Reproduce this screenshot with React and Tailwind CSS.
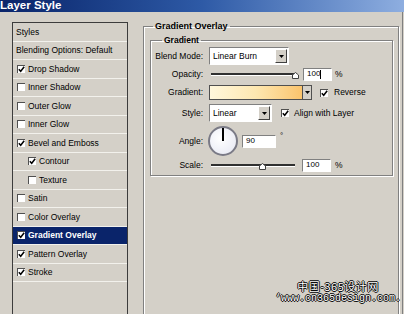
import React from "react";

function Check({ checked }) {
  return (
    <span className="w-[8px] h-[8px] shrink-0 bg-white border-t border-l border-t-[#505050] border-l-[#505050] flex items-center justify-center">
      {checked && (
        <svg width="7" height="7" viewBox="0 0 7 7">
          <path d="M0.8 3.2 L2.7 5.3 L6.2 0.8" stroke="#000" strokeWidth="1.5" fill="none" />
        </svg>
      )}
    </span>
  );
}

function Arrow() {
  return (
    <svg width="5" height="3" viewBox="0 0 5 3">
      <path d="M0 0 H5 L2.5 3 Z" fill="#000" />
    </svg>
  );
}

function Dropdown({ text, w }) {
  return (
    <div className={`flex h-[18px] ${w} bg-white border border-t-[#808080] border-l-[#808080] border-r-[#ffffff] border-b-[#ffffff] items-center`}>
      <span className="flex-1 pl-[3px] text-[8.5px] leading-none">{text}</span>
      <span className="w-[12px] h-[14px] mr-[1px] bg-[#d4d0c8] border border-t-white border-l-white border-r-[#404040] border-b-[#404040] flex items-center justify-center">
        <Arrow />
      </span>
    </div>
  );
}

function Slider({ thumb }) {
  return (
    <div className="relative w-[88px] h-[14px] flex items-center ml-[2px]">
      <div className="w-[84px] h-[3px] bg-[#303030] border-b border-b-white" />
      <svg className="absolute top-[5px]" style={{ left: thumb }} width="7" height="7" viewBox="0 0 7 7">
        <path d="M0.5 6.5 V3 L3.5 0.5 L6.5 3 V6.5 Z" fill="#fff" stroke="#404040" strokeWidth="1" />
      </svg>
    </div>
  );
}

function Input({ text, w, cursor }) {
  return (
    <div className={`${w} h-[13px] bg-white border border-t-[#808080] border-l-[#808080] border-r-[#ffffff] border-b-[#ffffff] flex items-center pl-[3px] text-[8px] leading-none`}>
      {text}
      {cursor && <span className="inline-block w-[1px] h-[9px] bg-black" />}
    </div>
  );
}

function Label({ children }) {
  return <span className="w-[52px] shrink-0 text-right text-[8.5px] leading-none">{children}</span>;
}

const rows = [
  { label: "Styles", header: true },
  { label: "Blending Options: Default", header: true },
  { label: "Drop Shadow", checked: true },
  { label: "Inner Shadow" },
  { label: "Outer Glow" },
  { label: "Inner Glow" },
  { label: "Bevel and Emboss", checked: true },
  { label: "Contour", checked: true, indent: true },
  { label: "Texture", indent: true },
  { label: "Satin" },
  { label: "Color Overlay" },
  { label: "Gradient Overlay", checked: true, selected: true },
  { label: "Pattern Overlay", checked: true },
  { label: "Stroke", checked: true },
];

export default function App() {
  return (
    <div className="relative w-[404px] h-[314px] overflow-hidden bg-[#d4d0c8] font-['Liberation_Sans',Arial,sans-serif] text-black">
      <div className="h-[12px] bg-gradient-to-r from-[#0a246a] via-[#2e5aa6] to-[#8eaee0] flex items-center">
        <span className="text-white font-bold text-[11.5px] leading-none">Layer Style</span>
      </div>
      <div className="flex h-[302px] border-r border-r-[#808080] mr-[1px]">
        {/* Left panel */}
        <div className="ml-[12px] mt-[10px] w-[116px] h-[300px] border border-[#3c3c3c] shrink-0">
          {rows.map((r) => (
            <div
              key={r.label}
              className={`h-[18.5px] border-b border-b-[#f2f1ec] flex items-center ${r.selected ? "bg-[#0a246a] text-white font-bold" : ""} ${r.header ? "pl-[3px]" : r.indent ? "pl-[15px]" : "pl-[4px]"}`}
            >
              {!r.header && <Check checked={r.checked} />}
              <span className={`text-[8.5px] leading-none ${r.header ? "" : "ml-[3px]"}`}>{r.label}</span>
            </div>
          ))}
        </div>

        {/* Right panel */}
        <fieldset className="ml-[15px] mt-[9px] w-[256px] h-[300px] border border-[#808080] shadow-[inset_1px_1px_0_#ffffff,1px_1px_0_#ffffff] shrink-0">
          <legend className="ml-[9px] px-[2px] text-[9px] font-bold leading-[11px]">Gradient Overlay</legend>
          <fieldset className="ml-[6px] mt-[3px] w-[243px] border border-[#808080] shadow-[inset_1px_1px_0_#ffffff,1px_1px_0_#ffffff] pb-[3px]">
            <legend className="ml-[11px] px-[2px] text-[8.5px] font-bold leading-[10px]">Gradient</legend>
            <div className="flex flex-col pt-[2px]">
              <div className="flex items-center h-[18px]">
                <Label>Blend Mode:</Label>
                <div className="ml-[6px]"><Dropdown text="Linear Burn" w="w-[80px]" /></div>
              </div>
              <div className="flex items-center h-[14px] mt-[2px]">
                <Label>Opacity:</Label>
                <div className="ml-[6px]"><Slider thumb={81} /></div>
                <div className="ml-[4px]"><Input text="100" w="w-[29px]" cursor /></div>
                <span className="ml-[3px] text-[8.5px] leading-none">%</span>
              </div>
              <div className="flex items-center h-[15px] mt-[4px]">
                <Label>Gradient:</Label>
                <div className="ml-[6px] flex h-[15px] border border-[#505050]">
                  <div className="w-[92px] h-full bg-gradient-to-r from-[#fff7dc] via-[#fde7b0] to-[#fbc46c]" />
                  <div className="w-[9px] h-full bg-[#d4d0c8] border-l border-l-[#505050] flex items-center justify-center"><Arrow /></div>
                </div>
                <div className="ml-[8px]"><Check checked /></div>
                <span className="ml-[6px] text-[8.5px] leading-none">Reverse</span>
              </div>
              <div className="flex items-center h-[18px] mt-[4px]">
                <Label>Style:</Label>
                <div className="ml-[6px]"><Dropdown text="Linear" w="w-[63px]" /></div>
                <div className="ml-[9px]"><Check checked /></div>
                <span className="ml-[5px] text-[8.5px] leading-none">Align with Layer</span>
              </div>
              <div className="flex items-center h-[30px] mt-[4px]">
                <Label>Angle:</Label>
                <div className="ml-[5px] w-[30px] h-[30px] rounded-full border-2 border-[#7a7a86] bg-[radial-gradient(circle_at_40%_40%,#ffffff,#e4e6f2)] flex justify-center">
                  <div className="w-[1.5px] h-[13px] bg-black" />
                </div>
                <div className="ml-[4px]"><Input text="90" w="w-[34px]" /></div>
                <span className="ml-[4px] self-start mt-[6px] text-[8px] leading-none">°</span>
              </div>
              <div className="flex items-center h-[14px] mt-[2px]">
                <Label>Scale:</Label>
                <div className="ml-[6px]"><Slider thumb={48} /></div>
                <div className="ml-[3px]"><Input text="100" w="w-[29px]" /></div>
                <span className="ml-[4px] text-[8.5px] leading-none">%</span>
              </div>
            </div>
          </fieldset>
        </fieldset>
      </div>

      {/* watermark overlay */}
      <div className="absolute left-[276px] top-[281px] w-[124px] flex flex-col items-center gap-[1px] text-white [text-shadow:1px_0_0_#000,-1px_0_0_#000,0_1px_0_#000,0_-1px_0_#000]">
        <span className="block h-[11px] text-[11px] leading-[11px] tracking-[0.5px] font-['Noto_Sans_CJK_SC',sans-serif]">中国-365设计网</span>
        <span className="block h-[11px] text-[10px] leading-[11px] font-['Liberation_Mono',monospace]">‘www.cn365design.com.</span>
      </div>
    </div>
  );
}
